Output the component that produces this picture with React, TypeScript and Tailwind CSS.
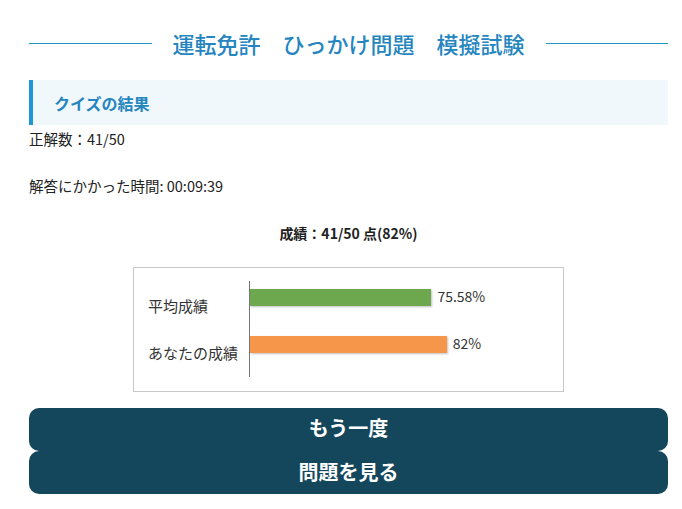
const font = { fontFamily: '"Noto Sans CJK JP", "Noto Sans", sans-serif' };

const bars = [
  { label: "平均成績", value: 75.58, text: "75.58%", color: "bg-[#6ea84e]" },
  { label: "あなたの成績", value: 82, text: "82%", color: "bg-[#f5964a]" },
];

export default function App() {
  return (
    <div className="min-h-[509px] bg-white pl-[29px] pr-[14px] text-[#222]" style={font}>
      <div className="mt-[21px] flex h-[44px] items-start gap-[21px]">
        <div className="mt-[22px] h-px flex-1 bg-[#1e96c8]" />
        <h1 className="mt-[11px] text-[22px] font-medium leading-none tracking-normal text-[#2485bf]">
          運転免許　ひっかけ問題　模擬試験
        </h1>
        <div className="mt-[22px] h-px flex-1 bg-[#1e96c8]" />
      </div>

      <div className="mt-[15px] flex h-[45px] items-center border-l-4 border-[#1c96d4] bg-[#f1f8fc] pl-[21px]">
        <h2 className="text-[16px] font-bold leading-none text-[#2485bf]">クイズの結果</h2>
      </div>

      <p className="text-[14.5px] leading-[28px]">正解数：41/50</p>
      <p className="mt-[19px] text-[14.5px] leading-[28px]">解答にかかった時間: 00:09:39</p>
      <p className="mt-[19px] text-center text-[14px] font-bold leading-[28px]">成績：41/50 点(82%)</p>

      <div className="mx-auto mt-[20px] flex h-[125px] w-[431px] border border-[#c8c8c8] pt-[13px]">
        <div className="w-[115px] pl-[14px] pt-[15px] text-[15px] leading-[20px] text-[#333]">
          {bars.map((b, i) => (
            <div key={b.label} className={i > 0 ? "mt-[27px]" : ""}>
              {b.label}
            </div>
          ))}
        </div>
        <div className="h-[96px] flex-1 border-l border-[#777] pt-[8px]">
          {bars.map((b, i) => (
            <div key={b.label} className={`flex items-center ${i > 0 ? "mt-[30px]" : ""}`}>
              <div
                className={`h-[17px] ${b.color} shadow-[1px_1px_2px_rgba(0,0,0,0.25)]`}
                style={{ width: `${b.value * 2.4}px` }}
              />
              <span className="ml-[6px] -mt-[3px] text-[14px] leading-none text-[#333]">{b.text}</span>
            </div>
          ))}
        </div>
      </div>

      <div className="mt-[16px] flex flex-col">
        <button className="flex h-[43px] items-center justify-center rounded-[10px] bg-[#15475c] pb-[3px] text-[20px] font-bold text-white">
          もう一度
        </button>
        <button className="flex h-[43px] items-center justify-center rounded-[10px] bg-[#15475c] pb-[2px] text-[20px] font-bold text-white">
          問題を見る
        </button>
      </div>
    </div>
  );
}
